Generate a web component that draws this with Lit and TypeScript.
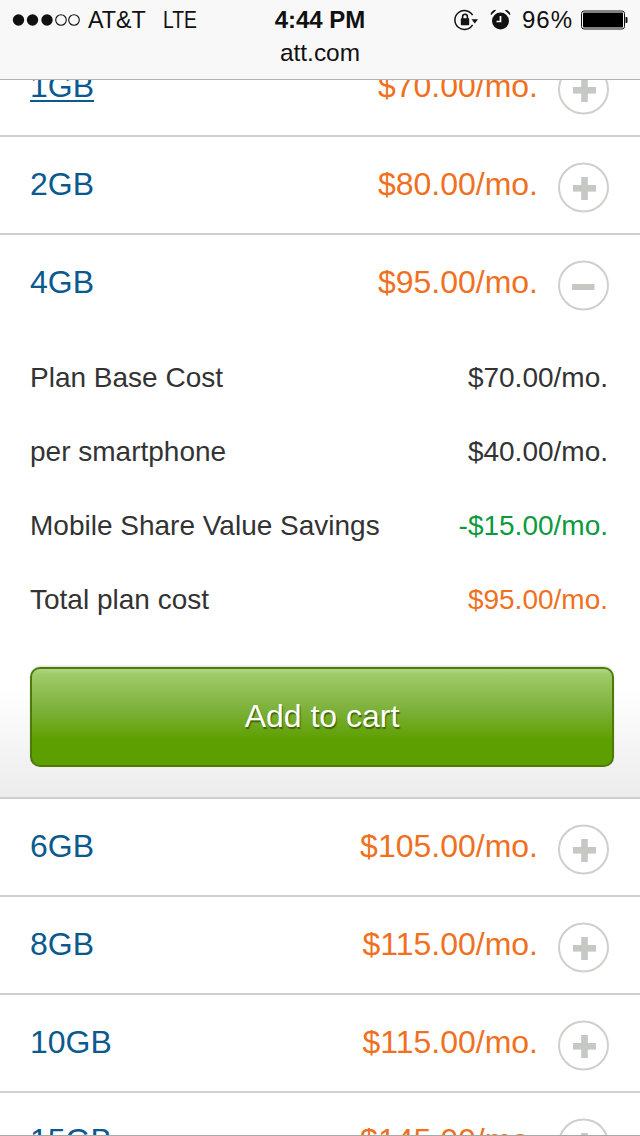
import { LitElement, html, css, svg } from "lit";
import { customElement } from "lit/decorators.js";

interface Plan { name: string; price: string; open?: boolean; link?: boolean; }

const PLANS: Plan[] = [
  { name: "1GB", price: "$70.00/mo.", link: true },
  { name: "2GB", price: "$80.00/mo." },
  { name: "4GB", price: "$95.00/mo.", open: true },
  { name: "6GB", price: "$105.00/mo." },
  { name: "8GB", price: "$115.00/mo." },
  { name: "10GB", price: "$115.00/mo." },
  { name: "15GB", price: "$145.00/mo." },
];

const DETAILS = [
  { label: "Plan Base Cost", value: "$70.00/mo.", tone: "" },
  { label: "per smartphone", value: "$40.00/mo.", tone: "" },
  { label: "Mobile Share Value Savings", value: "-$15.00/mo.", tone: "green" },
  { label: "Total plan cost", value: "$95.00/mo.", tone: "orange" },
];

@customElement("app-root")
export class AppRoot extends LitElement {
  static styles = css`
    :host {
      display: block;
      position: relative;
      width: 640px;
      height: 1136px;
      overflow: hidden;
      background: #fff;
      font-family: "Liberation Sans", Arial, sans-serif;
    }
    .chrome {
      position: absolute;
      top: 0;
      left: 0;
      right: 0;
      height: 79px;
      background: #f8f8f8;
      border-bottom: 1px solid #b4b4b4;
      color: #111;
      z-index: 2;
    }
    .status {
      display: grid;
      grid-template-columns: 1fr auto 1fr;
      align-items: center;
      height: 40px;
      font-size: 24px;
    }
    .left { display: flex; align-items: center; padding-left: 11px; }
    .signal { display: block; margin-right: 7px; }
    .carrier { font-size: 23.3px; }
    .lte {
      display: inline-block;
      margin-left: 17px;
      font-size: 23px;
      transform: scaleX(0.84);
      transform-origin: left center;
    }
    .time { font-weight: 700; font-size: 24px; }
    .right { display: flex; align-items: center; justify-content: flex-end; padding-right: 12px; }
    .right svg { display: block; }
    .alarm { margin-left: 11px; }
    .pct { margin-left: 10px; margin-right: 8px; letter-spacing: 1px; }
    .url { text-align: center; font-size: 24.4px; line-height: 26px; }
    .toolbar-edge {
      position: absolute;
      left: 0;
      right: 0;
      bottom: 0;
      height: 1px;
      background: #a8a8a8;
      z-index: 2;
    }
    .list { padding-top: 39px; }
    .plan { border-bottom: 2px solid #cfcfcf; }
    .head {
      display: flex;
      align-items: center;
      height: 96px;
      padding: 0 31px 2px 30px;
      box-sizing: border-box;
      font-size: 32px;
    }
    .name { flex: 1; color: #0b5a8f; }
    .name.link { text-decoration: underline; text-decoration-thickness: 2px; text-underline-offset: 3px; }
    .price { color: #f0701e; margin-right: 20px; }
    .toggle { display: block; margin-top: 7px; }
    .open-body {
      margin-top: 10px;
      padding: 0 26px 30px 30px;
      background: linear-gradient(to bottom, #fff 0%, #fff 76%, #ececec 100%);
    }
    .detail {
      display: flex;
      justify-content: space-between;
      align-items: center;
      height: 74px;
      padding-right: 6px;
      font-size: 28px;
      color: #333;
    }
    .green { color: #0c9a3e; }
    .orange { color: #f0701e; }
    .cart {
      display: block;
      width: 584px;
      height: 100px;
      margin-top: 30px;
      box-sizing: border-box;
      border: 2px solid #4f7a05;
      border-radius: 10px;
      padding: 0 0 2px;
      background: linear-gradient(to bottom, #b3d587 0%, #9fca68 6%, #7db13a 42%, #5e9f00 74%, #5e9f00 100%);
      box-shadow: 0 -1px 2px rgba(0, 0, 0, 0.15);
      color: #fff;
      font: 32px "Liberation Sans", Arial, sans-serif;
      text-shadow: 1px 2px 1px rgba(50, 80, 0, 0.75);
    }
  `;

  private signal() {
    const dots = [18.5, 32.5, 47].map((x) => svg`<circle cx=${x - 11} cy="9" r="5.7" fill="#111"/>`);
    const empty = [61, 74].map((x) => svg`<circle cx=${x - 11} cy="9" r="5.3" fill="none" stroke="#111" stroke-width="1.1"/>`);
    return html`<svg class="signal" width="70" height="18" viewBox="0 0 70 18">${dots}${empty}</svg>`;
  }

  private rotationLock() {
    return html`<svg width="26" height="24" viewBox="0 0 26 24">
      <path d="M19.6 16.8A9.5 9.5 0 1 1 19.6 7.2" fill="none" stroke="#111" stroke-width="1.5"/>
      <path d="M18.5 11.2h6.5l-3.2 4.3z" fill="#111"/>
      <path d="M9.6 11V8.6a2.4 2.4 0 0 1 4.8 0V11" fill="none" stroke="#111" stroke-width="1.6"/>
      <rect x="7.8" y="10.2" width="8.4" height="7" rx="0.8" fill="#111"/>
    </svg>`;
  }

  private alarm() {
    return html`<svg class="alarm" width="22" height="24" viewBox="0 0 22 24">
      <circle cx="10.5" cy="13" r="8.5" fill="#111"/>
      <path d="M1 6.5C1.5 3.8 3.2 2.4 5.5 2.4L1 6.5zM20 6.5C19.5 3.8 17.8 2.4 15.5 2.4L20 6.5z" fill="#111" stroke="#111" stroke-width="1"/>
      <path d="M10.5 8V13.5H6.5" fill="none" stroke="#fff" stroke-width="1.7"/>
    </svg>`;
  }

  private battery() {
    return html`<svg width="47" height="20" viewBox="0 0 47 20">
      <rect x="0.5" y="1" width="43" height="18" rx="2.5" fill="none" stroke="#111" stroke-width="1"/>
      <rect x="2" y="2.5" width="40" height="15" rx="1" fill="#000"/>
      <path d="M44.5 7h1a1 1 0 0 1 1 1v4a1 1 0 0 1-1 1h-1z" fill="#111"/>
    </svg>`;
  }

  private toggle(open: boolean) {
    const mark = open
      ? svg`<rect x="14" y="24" width="22.5" height="6" fill="#c6c8c3"/>`
      : svg`<rect x="15" y="23" width="23" height="6.6" fill="#c6c8c3"/><rect x="23.2" y="15" width="6.6" height="23" fill="#c6c8c3"/>`;
    return html`<svg class="toggle" width="51" height="51" viewBox="0 0 51 51">
      <ellipse cx="25.5" cy="25.5" rx="24.5" ry="24" fill="#fff" stroke="#cfcfcc" stroke-width="2"/>
      ${mark}
    </svg>`;
  }

  private row(p: Plan) {
    return html`<div class="plan">
      <div class="head">
        <span class="name ${p.link ? "link" : ""}">${p.name}</span>
        <span class="price">${p.price}</span>
        ${this.toggle(!!p.open)}
      </div>
      ${p.open
        ? html`<div class="open-body">
            ${DETAILS.map(
              (d) => html`<div class="detail">
                <span>${d.label}</span><span class=${d.tone}>${d.value}</span>
              </div>`
            )}
            <button class="cart">Add to cart</button>
          </div>`
        : ""}
    </div>`;
  }

  render() {
    return html`
      <div class="chrome">
        <div class="status">
          <div class="left">${this.signal()}<span class="carrier">AT&amp;T</span><span class="lte">LTE</span></div>
          <div class="time">4:44 PM</div>
          <div class="right">
            ${this.rotationLock()}${this.alarm()}<span class="pct">96%</span>${this.battery()}
          </div>
        </div>
        <div class="url">att.com</div>
      </div>
      <div class="list">${PLANS.map((p) => this.row(p))}</div>
      <div class="toolbar-edge"></div>
    `;
  }
}
